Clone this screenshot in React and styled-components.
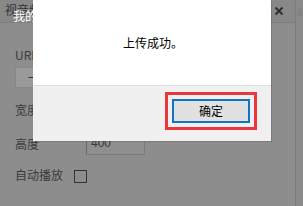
import React from "react";
import styled, { createGlobalStyle } from "styled-components";

const Global = createGlobalStyle`
  html, body { margin: 0; padding: 0; }
  body {
    width: 303px; height: 206px; overflow: hidden;
    font-family: "Noto Sans CJK SC", "Noto Sans", sans-serif;
    background: #8d8d8d;
  }
`;

const Page = styled.div`
  position: relative;
  width: 303px;
  height: 206px;
  overflow: hidden;
  display: flex;
  background: #8d8d8d;
`;

const Window = styled.div`
  width: 295px;
  height: 206px;
  border-right: 1px solid #7b7b7b;
  display: flex;
  flex-direction: column;
  position: relative;
`;

const RightStrip = styled.div`
  flex: 1;
  background: #8a8a8a;
  display: flex;
  justify-content: center;
  padding-top: 4px;
  color: #7c7c7c;
  font-size: 11px;
  line-height: 14px;
`;

const TitleBar = styled.div`
  height: 22px;
  border-bottom: 1px solid #7d7d7d;
  background: #888888;
  display: flex;
  align-items: center;
  padding-left: 5px;
  padding-right: 10px;
  position: relative;
`;

const Title = styled.span`
  font-size: 12px;
  color: #333;
  line-height: 14px;
  margin-top: -2px;
  flex: 1;
`;

const GhostTitle = styled.span`
  position: absolute;
  left: 13px;
  top: 9px;
  font-size: 12px;
  line-height: 14px;
  color: #fff;
`;

const Close = styled.span`
  width: 12px;
  height: 12px;
  display: flex;
  align-items: center;
  justify-content: center;
`;

const Form = styled.div`
  display: flex;
  flex-direction: column;
  padding-left: 15px;
  font-size: 12px;
  color: #3a3a3a;
`;

const Label = styled.div`
  height: 20px;
  line-height: 20px;
  margin-top: ${p => p.$mt || 0}px;
  width: ${p => (p.$w ? p.$w + "px" : "auto")};
  flex-shrink: 0;
`;

const UploadButton = styled.div`
  margin-top: 2px;
  width: 90px;
  height: 21px;
  background: #9a9a9a;
  border: 1px solid #888;
  box-sizing: border-box;
  font-size: 12px;
  line-height: 19px;
  padding-left: 12px;
  color: #333;
`;

const Row = styled.div`
  display: flex;
  align-items: center;
  height: 22px;
  margin-top: ${p => p.$mt}px;
  gap: ${p => p.$gap || 0}px;
`;

const Input = styled.div`
  width: 59px;
  height: 21px;
  box-sizing: border-box;
  border: 1px solid #7a7a7a;
  border-left-color: #6a6a6a;
  border-top-color: #6a6a6a;
  background: #8f8f8f;
  font-size: 12px;
  line-height: 17px;
  padding-left: 4px;
  color: #3a3a3a;
  font-family: "Liberation Sans", sans-serif;
`;

const Checkbox = styled.div`
  width: 13px;
  height: 13px;
  box-sizing: border-box;
  border: 1px solid #333;
  margin-top: 2px;
`;

const Dialog = styled.div`
  position: absolute;
  left: 33px;
  top: 0;
  width: 238px;
  height: 141px;
  display: flex;
  flex-direction: column;
  box-shadow: 1px 1px 0 rgba(0, 0, 0, 0.12);
`;

const Body = styled.div`
  height: 85px;
  background: #fff;
  display: flex;
  justify-content: center;
  align-items: center;
  font-size: 12px;
  color: #000;
  padding-left: 2px;
`;

const Footer = styled.div`
  flex: 1;
  background: #f0f0f0;
  border-top: 1px solid #dfdfdf;
  display: flex;
  justify-content: flex-end;
  align-items: flex-start;
  padding-top: 6px;
  padding-right: 14px;
`;

const Highlight = styled.div`
  border: 3px solid #e9383d;
  padding: 4px;
  display: flex;
`;

const OkButton = styled.button`
  width: 78px;
  height: 24px;
  box-sizing: border-box;
  border: 2px solid #0f74c3;
  background: #e1e1e1;
  font-family: "Noto Sans CJK SC", sans-serif;
  font-size: 12px;
  color: #000;
  padding: 0;
  line-height: 18px;
`;

export default function App() {
  return (
    <>
      <Global />
      <Page>
        <Window>
          <TitleBar>
            <Title>视音频</Title>
            <GhostTitle>我的</GhostTitle>
            <Close>
              <svg width="10" height="10" viewBox="0 0 10 10">
                <path d="M1.5 1.5 L8.5 8.5 M8.5 1.5 L1.5 8.5" stroke="#2e2e2e" strokeWidth="2" />
              </svg>
            </Close>
          </TitleBar>
          <Form>
            <Label $mt={22}>URL</Label>
            <UploadButton>一 上传</UploadButton>
            <Row $mt={11}>
              <Label $w={71}>宽度</Label>
              <Input>600</Input>
            </Row>
            <Row $mt={12}>
              <Label $w={71}>高度</Label>
              <Input>400</Input>
            </Row>
            <Row $mt={9} $gap={11}>
              <Label>自动播放</Label>
              <Checkbox />
            </Row>
          </Form>
          <Dialog>
            <Body>上传成功。</Body>
            <Footer>
              <Highlight>
                <OkButton>确定</OkButton>
              </Highlight>
            </Footer>
          </Dialog>
        </Window>
        <RightStrip>ā</RightStrip>
      </Page>
    </>
  );
}
